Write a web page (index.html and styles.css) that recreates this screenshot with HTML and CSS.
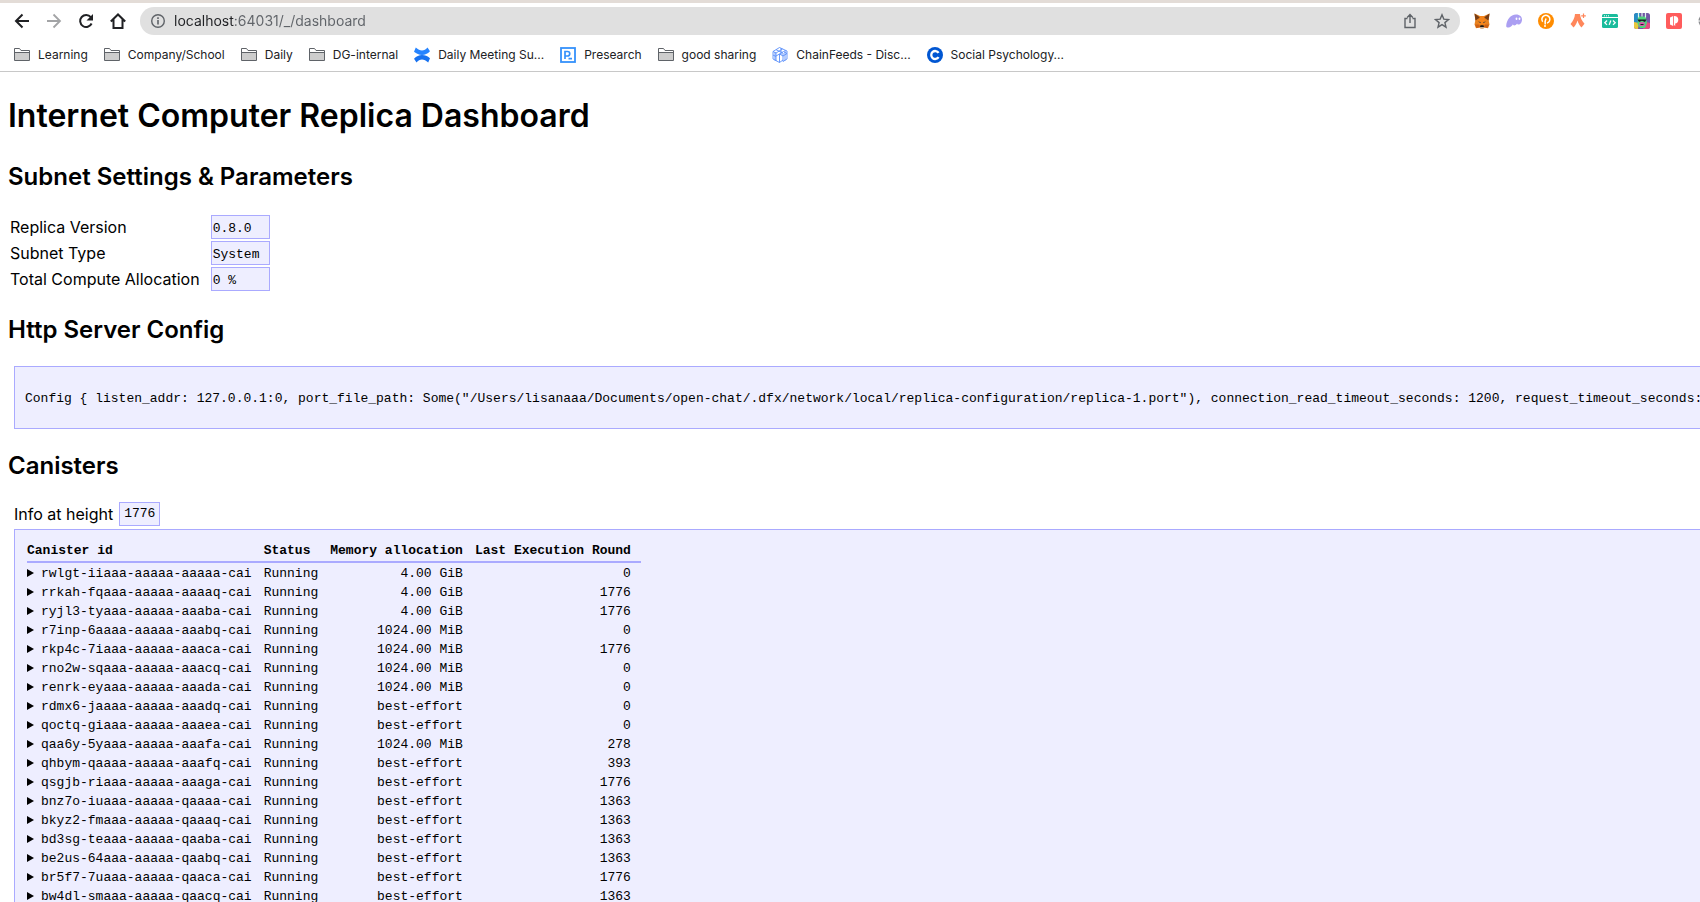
FILE: index.html
```html
<!DOCTYPE html>
<html lang="en">
<head>
<meta charset="utf-8">
<title>Internet Computer Replica Dashboard</title>
<link rel="stylesheet" href="styles.css">
</head>
<body>
<header class="browser">
  <div class="toolbar">
    <nav class="nav-buttons" aria-label="Navigation">
      <button class="icon-button" aria-label="Back"><svg viewBox="0 0 16 16"><path d="M15 8H2.500M8.500 1.500L2 8l6.500 6.500" fill="none" stroke="#202124" stroke-width="2"/></svg></button>
      <button class="icon-button" aria-label="Forward"><svg viewBox="0 0 16 16"><path d="M1 8h12.500M7.500 1.500L14 8l-6.500 6.500" fill="none" stroke="#a3a4a6" stroke-width="1.800"/></svg></button>
      <button class="icon-button" aria-label="Reload"><svg viewBox="0 0 16 16"><path d="M13.600 10.500A6 6 0 1 1 12.800 4.200" fill="none" stroke="#202124" stroke-width="2"/><path d="M15 1v6.500H8.500z" fill="#202124"/></svg></button>
      <button class="icon-button" aria-label="Home"><svg viewBox="0 0 16 16"><path d="M.8 8.500L8 1.500l7.200 7M3.500 6.500V15h9V6.500" fill="none" stroke="#202124" stroke-width="2"/></svg></button>
    </nav>
    <div class="address-bar">
      <button class="icon-button" aria-label="Site information"><svg viewBox="0 0 16 16"><circle cx="8" cy="8" r="6.300" fill="none" stroke="#5f6368" stroke-width="1.400"/><path d="M8 7v4.500M8 4.300v1.600" stroke="#5f6368" stroke-width="1.600"/></svg></button>
      <input class="address" type="text" aria-label="Address" value="localhost:64031/_/dashboard">
      <button class="icon-button" aria-label="Share"><svg viewBox="0 0 16 16"><path d="M5.500 5.500H3v9h10v-9h-2.500M8 10V1.800M5.200 4.400L8 1.600l2.800 2.800" fill="none" stroke="#5f6368" stroke-width="1.400"/></svg></button>
      <button class="icon-button" aria-label="Bookmark"><svg viewBox="0 0 16 16"><path d="M8 1.800l1.800 4.300 4.700.4-3.600 3.100 1.100 4.600L8 11.700l-4 2.500 1.100-4.600L1.500 6.500l4.700-.4z" fill="none" stroke="#5f6368" stroke-width="1.400"/></svg></button>
    </div>
    <div class="extensions">
      <button class="icon-button" aria-label="MetaMask"><svg viewBox="0 0 16 16"><path d="M.5.500L6 3h4l5.500-2.500-.8 7 .8 4-1.500 3.800-3.500-.8-1.200 1H6.700l-1.200-1-3.500.8-1.500-3.800.8-4z" fill="#e8821e"/><path d="M.5.500L6 4.500 1.500 7.500zM15.500.500L10 4.500l4.500 3z" fill="#763d16"/><path d="M6 3h4l1 5 1 4-4-1-4 1 1-4z" fill="#f6851b"/><path d="M1 11.500h4l1.500 2.500-4 1zM15 11.500h-4L9.500 14l4 1z" fill="#cd6116"/><path d="M4 8.500l2.500.5.2 1.300zM12 8.500L9.500 9l-.2 1.300z" fill="#233447"/><path d="M6.500 12.300h3l.5 1.700H6z" fill="#161616"/><path d="M6 14h4l-.5 1.500h-3z" fill="#c0ad9e"/></svg></button>
      <button class="icon-button" aria-label="Phantom"><svg viewBox="0 0 16 16"><path d="M.2 13C.5 7 4.500 1.500 10 1.500c4 0 6 2.500 6 5.200 0 2.600-1.800 4.900-3.500 4.900-.9 0-1.300-.5-1.300-1.100-.8 1.300-2 2-3 2-.8 0-1.200-.5-1.200-1.200C6 13 4.200 14.500 2.500 14.500c-1.400 0-2.300-.5-2.300-1.500z" fill="#ab9ff2"/><ellipse cx="10.500" cy="5.800" rx=".9" ry="1.300" fill="#fff"/><ellipse cx="13.500" cy="5.800" rx=".9" ry="1.300" fill="#fff"/></svg></button>
      <button class="icon-button" aria-label="Polkadot"><svg viewBox="0 0 16 16"><circle cx="8" cy="8" r="8" fill="#ff8c00"/><path d="M6.800 9.500L8 5.500M4.700 8.700a4 4 0 1 1 4.300 1.400M7.200 8.500v3" fill="none" stroke="#fff" stroke-width="1.500"/><circle cx="7" cy="12.900" r="1" fill="#fff"/></svg></button>
      <button class="icon-button" aria-label="Argent"><svg viewBox="0 0 16 16"><path d="M5 1h5c.2 3.500 2 7 4.500 9.800L11.500 14.500C9.500 12.500 8.300 10.200 7.500 7.500c-.8 2.700-2 5-4 7L.5 11C3 8.200 4.800 4.500 5 1z" fill="#ff875b"/><path d="M13.500.500v4.600M11.200 2.800h4.600" stroke="#ff875b" stroke-width="1.200"/></svg></button>
      <button class="icon-button" aria-label="Web tools"><svg viewBox="0 0 16 16"><rect y="1" width="16" height="14" rx="1.500" fill="#1abc9c"/><path d="M0 4.500h16" stroke="#fff" stroke-width="1"/><path d="M2 2.800h1M4 2.800h1M6 2.800h1" stroke="#fff" stroke-width="1"/><path d="M5 7.500L2.800 9.700 5 11.900M11 7.500l2.200 2.200L11 11.900M8.800 7.500l-1.600 4.400" fill="none" stroke="#fff" stroke-width="1.300"/></svg></button>
      <button class="icon-button" aria-label="Profile avatar"><svg viewBox="0 0 16 16"><rect width="16" height="16" rx="2.500" fill="#7357a5"/><path d="M0 2.500V9l6 2V0H2.500Q0 0 0 2.500z" fill="#268dc4"/><path d="M0 9l5 1-1 6H2.500Q0 16 0 13.500z" fill="#e8c83c"/><path d="M12 9l4 1v3.500q0 2.500-2.500 2.500H9z" fill="#e54b80"/><path d="M4 3.500h8V5l1 5-2 5H6l-2.500-4z" fill="#4fd37b"/><path d="M4.500 0v4.500M8 0v3.500M11.500 0v4.500" stroke="#dff5ef" stroke-width="1.200"/><path d="M3.500 6.500h9L11 9 8 7.800 5 9z" fill="#191b26"/><ellipse cx="8" cy="11" rx="2.800" ry="2" fill="#d957ac"/><path d="M6.500 11.500h3" stroke="#222" stroke-width="1"/></svg></button>
      <button class="icon-button" aria-label="Reader"><svg viewBox="0 0 16 16"><rect width="16" height="16" rx="2" fill="#ff5c5c"/><path d="M4 4.500L7.200 3v10L4 11.500z" fill="#fff"/><path d="M8 3c3 0 4.300 1.500 4.300 3.800S11 10.500 9.200 10.500V13L8 12z" fill="#fff"/></svg></button>
      <button class="icon-button" aria-label="More extensions"><svg viewBox="0 0 16 16"><circle cx="8" cy="8" r="7.500" fill="#8b8d90"/><path d="M0 8h16" stroke="#fff" stroke-width="1"/></svg></button>
    </div>
  </div>
  <nav class="bookmarks" aria-label="Bookmarks">
    <svg class="symbols" aria-hidden="true"><symbol id="folder" viewBox="0 0 16 16"><path d="M.5 13.500v-12h5l1.500 2h8.500v10z" fill="#fff" stroke="#5f6368"/><path d="M1 5.500h14V13H1z" fill="#cdcdcd"/><path d="M.5 5.500h15" stroke="#5f6368"/></symbol></svg>
    <a class="bookmark" href="#"><svg><use href="#folder"/></svg>Learning</a>
    <a class="bookmark" href="#"><svg><use href="#folder"/></svg>Company/School</a>
    <a class="bookmark" href="#"><svg><use href="#folder"/></svg>Daily</a>
    <a class="bookmark" href="#"><svg><use href="#folder"/></svg>DG-internal</a>
    <a class="bookmark" href="#"><svg viewBox="0 0 16 16"><path d="M1.800.500C4 2.500 6 3.500 8 3.500s4-1 5.500-3L16 4.300C13.500 6.800 11 8 8 8S2.500 6.800 0 4.800z" fill="#2684ff"/><path d="M14.200 15.500C12 13.500 10 12.500 8 12.500s-4 1-5.500 3L0 11.700C2.500 9.200 5 8 8 8s5.500 1.200 8 3.200z" fill="#1872f0"/></svg>Daily Meeting Su...</a>
    <a class="bookmark" href="#"><svg viewBox="0 0 16 16"><rect x="1" y="1" width="14" height="14" fill="#fff" stroke="#3591fb" stroke-width="1.800"/><path d="M5 12V4.500h2.500a2 2 0 0 1 0 4.500H5M8.500 11.700H12" fill="none" stroke="#3591fb" stroke-width="1.700"/></svg>Presearch</a>
    <a class="bookmark" href="#"><svg><use href="#folder"/></svg>good sharing</a>
    <a class="bookmark" href="#"><svg viewBox="0 0 16 16"><path d="M1 4.500L7.500.500 15 4v8l-4 2.500V9L7.500 7v8.500L1 12zM1 4.500l3 1.500v8M4 6l6.500-4M7.500 7l4-2.500 3.500 2M11 9l4-2.500M4 9l3.500-2M4 2.700L11 6v3M1 8l3 1.500M7.500 15.500L11 13M3 5v8.500M9 1.200v6.600M13 3v10.500" fill="none" stroke="#5a8ffa" stroke-width=".9"/></svg>ChainFeeds - Disc...</a>
    <a class="bookmark" href="#"><svg viewBox="0 0 16 16"><circle cx="8" cy="8" r="8" fill="#0056d2"/><path d="M11.600 10.200a4 4 0 1 1 0-4.400" fill="none" stroke="#fff" stroke-width="2.300"/></svg>Social Psychology...</a>
  </nav>
</header>
<main class="page">
  <div class="content">
    <h1>Internet Computer Replica Dashboard</h1>
    <h2>Subnet Settings &amp; Parameters</h2>
    <table class="settings">
      <tr><th scope="row">Replica Version</th><td class="value">0.8.0</td></tr>
      <tr><th scope="row">Subnet Type</th><td class="value">System</td></tr>
      <tr><th scope="row">Total Compute Allocation</th><td class="value">0 %</td></tr>
    </table>
    <h2>Http Server Config</h2>
    <div class="panel"><pre>Config { listen_addr: 127.0.0.1:0, port_file_path: Some("/Users/lisanaaa/Documents/open-chat/.dfx/network/local/replica-configuration/replica-1.port"), connection_read_timeout_seconds: 1200, request_timeout_seconds:</pre></div>
    <h2>Canisters</h2>
    <div class="height-info">Info at height <span class="height-value">1776</span></div>
    <div class="panel">
      <table class="canisters">
        <thead><tr><th>Canister id</th><th>Status</th><th class="number">Memory allocation</th><th class="number">Last Execution Round</th></tr></thead>
        <tbody>
          <tr><td><details><summary>rwlgt-iiaaa-aaaaa-aaaaa-cai</summary></details></td><td>Running</td><td class="number">4.00 GiB</td><td class="number">0</td></tr>
          <tr><td><details><summary>rrkah-fqaaa-aaaaa-aaaaq-cai</summary></details></td><td>Running</td><td class="number">4.00 GiB</td><td class="number">1776</td></tr>
          <tr><td><details><summary>ryjl3-tyaaa-aaaaa-aaaba-cai</summary></details></td><td>Running</td><td class="number">4.00 GiB</td><td class="number">1776</td></tr>
          <tr><td><details><summary>r7inp-6aaaa-aaaaa-aaabq-cai</summary></details></td><td>Running</td><td class="number">1024.00 MiB</td><td class="number">0</td></tr>
          <tr><td><details><summary>rkp4c-7iaaa-aaaaa-aaaca-cai</summary></details></td><td>Running</td><td class="number">1024.00 MiB</td><td class="number">1776</td></tr>
          <tr><td><details><summary>rno2w-sqaaa-aaaaa-aaacq-cai</summary></details></td><td>Running</td><td class="number">1024.00 MiB</td><td class="number">0</td></tr>
          <tr><td><details><summary>renrk-eyaaa-aaaaa-aaada-cai</summary></details></td><td>Running</td><td class="number">1024.00 MiB</td><td class="number">0</td></tr>
          <tr><td><details><summary>rdmx6-jaaaa-aaaaa-aaadq-cai</summary></details></td><td>Running</td><td class="number">best-effort</td><td class="number">0</td></tr>
          <tr><td><details><summary>qoctq-giaaa-aaaaa-aaaea-cai</summary></details></td><td>Running</td><td class="number">best-effort</td><td class="number">0</td></tr>
          <tr><td><details><summary>qaa6y-5yaaa-aaaaa-aaafa-cai</summary></details></td><td>Running</td><td class="number">1024.00 MiB</td><td class="number">278</td></tr>
          <tr><td><details><summary>qhbym-qaaaa-aaaaa-aaafq-cai</summary></details></td><td>Running</td><td class="number">best-effort</td><td class="number">393</td></tr>
          <tr><td><details><summary>qsgjb-riaaa-aaaaa-aaaga-cai</summary></details></td><td>Running</td><td class="number">best-effort</td><td class="number">1776</td></tr>
          <tr><td><details><summary>bnz7o-iuaaa-aaaaa-qaaaa-cai</summary></details></td><td>Running</td><td class="number">best-effort</td><td class="number">1363</td></tr>
          <tr><td><details><summary>bkyz2-fmaaa-aaaaa-qaaaq-cai</summary></details></td><td>Running</td><td class="number">best-effort</td><td class="number">1363</td></tr>
          <tr><td><details><summary>bd3sg-teaaa-aaaaa-qaaba-cai</summary></details></td><td>Running</td><td class="number">best-effort</td><td class="number">1363</td></tr>
          <tr><td><details><summary>be2us-64aaa-aaaaa-qaabq-cai</summary></details></td><td>Running</td><td class="number">best-effort</td><td class="number">1363</td></tr>
          <tr><td><details><summary>br5f7-7uaaa-aaaaa-qaaca-cai</summary></details></td><td>Running</td><td class="number">best-effort</td><td class="number">1776</td></tr>
          <tr><td><details><summary>bw4dl-smaaa-aaaaa-qaacq-cai</summary></details></td><td>Running</td><td class="number">best-effort</td><td class="number">1363</td></tr>
        </tbody>
      </table>
    </div>
  </div>
</main>
</body>
</html>
```

FILE: styles.css
```css
* {
  box-sizing: border-box;
}

body {
  display: flex;
  flex-direction: column;
  height: 100vh;
  margin: 0;
  overflow: hidden;
  background: #fff;
  color: #000;
  font-family: Inter, "Liberation Sans", sans-serif;
  font-size: 16px;
}

/* Browser chrome */
.browser {
  flex: none;
  border-top: 3px solid #e3dcd7;
  border-bottom: 1px solid #c8c8c8;
}

.toolbar {
  display: flex;
  align-items: center;
  gap: 14px;
  padding-top: 4px;
  padding-left: 14px;
  overflow: hidden;
}

.nav-buttons,
.extensions {
  display: flex;
  flex: none;
  gap: 16px;
}

.extensions {
  margin-right: -14px;
}

.icon-button {
  flex: none;
  width: 16px;
  height: 16px;
  padding: 0;
  border: 0;
  background: none;
}

.icon-button svg {
  display: block;
  width: 16px;
  height: 16px;
}

.address-bar {
  display: flex;
  flex: 1;
  align-items: center;
  gap: 16px;
  height: 28px;
  padding: 0 10px;
  border-radius: 14px;
  background: #e0e0e0;
}

.address {
  flex: 1;
  min-width: 0;
  margin-left: -8px;
  padding: 0;
  border: 0;
  outline: 0;
  background: linear-gradient(90deg, #202124 60px, #5f6368 60px);
  -webkit-background-clip: text;
  background-clip: text;
  color: transparent;
  font: 14px/20px Inter, sans-serif;
}

.bookmarks {
  display: flex;
  align-items: center;
  gap: 16px;
  height: 36px;
  padding: 4px 14px 0;
}

.symbols {
  position: absolute;
  width: 0;
  height: 0;
}

.bookmark {
  display: flex;
  align-items: center;
  gap: 8px;
  color: #202124;
  font-size: 12px;
  line-height: 16px;
  text-decoration: none;
  white-space: nowrap;
}

.bookmark svg {
  width: 16px;
  height: 16px;
}

/* Dashboard */
.page {
  flex: 1;
  min-height: 0;
  overflow: hidden;
}

.content {
  width: max-content;
  min-width: 100%;
  padding: 0 8px;
}

h1 {
  margin: 21px 0;
  font-size: 32px;
  line-height: 46px;
  font-weight: 600;
}

h2 {
  margin: 20px 0;
  font-size: 24px;
  line-height: 33px;
  font-weight: 600;
}

.settings {
  border-spacing: 2px;
}

.settings th {
  padding: 0 9px 0 0;
  font-weight: 400;
  line-height: 24px;
  text-align: left;
}

.value,
.height-value {
  border: 1px solid #aaf;
  background: #eef;
  font-family: "Liberation Mono", monospace;
  font-size: 13px;
}

.value {
  padding: 3px 10px 1px 1px;
}

.panel {
  margin: 0 6px;
  padding: 10px;
  border: 1px solid #aaf;
  background: #eef;
  font-family: "Liberation Mono", monospace;
  font-size: 13px;
  line-height: 15px;
}

pre {
  margin: 14px 0 12px;
  font: inherit;
}

.height-info {
  display: flex;
  align-items: center;
  gap: 6px;
  margin: 0 6px 3px;
  line-height: 22px;
}

.height-value {
  padding: 0 4px;
}

.canisters {
  margin: 0 2px;
  border-collapse: collapse;
}

.canisters th,
.canisters td {
  padding: 3px 12px 1px 0;
  text-align: left;
}

.canisters th {
  border-bottom: 2px solid #aaf;
  padding-bottom: 3px;
}

.canisters th:last-child,
.canisters td:last-child {
  padding-right: 10px;
}

.canisters .number {
  text-align: right;
}

.canisters summary {
  display: flex;
  align-items: center;
  gap: 7px;
}

.canisters summary::before {
  margin-bottom: 2px;
  border: solid transparent;
  border-width: 4px 0 4px 7px;
  border-left-color: #000;
  content: "";
}
```
